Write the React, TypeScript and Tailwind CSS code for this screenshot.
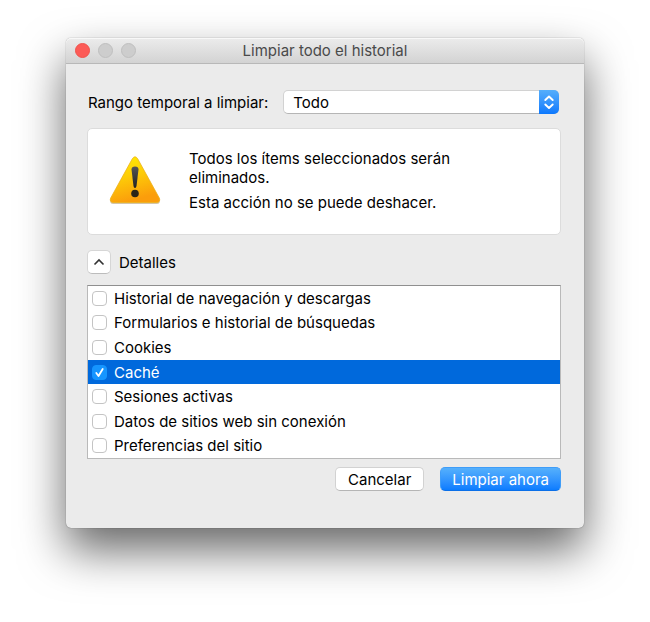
import { useState } from "react";

const ranges = ["La última hora", "Las últimas dos horas", "Las últimas cuatro horas", "Hoy", "Todo"];

const items = [
    "Historial de navegación y descargas",
    "Formularios e historial de búsquedas",
    "Cookies",
    "Caché",
    "Sesiones activas",
    "Datos de sitios web sin conexión",
    "Preferencias del sitio",
];

function TitleBar(props: { title: string }) {
    return <header className="relative flex h-[26px] items-center justify-center rounded-t-[5px] border-b border-[#b8b8b8] bg-linear-to-b from-[#ececec] to-[#d3d3d3] shadow-[inset_0_1px_0_#f8f8f8]">
        <div className="absolute left-[9px] flex gap-2">
            <button type="button" aria-label="Cerrar" className="size-[15px] rounded-full border border-[#f0524b] bg-[#fc5b57]" />
            <button type="button" aria-label="Minimizar" disabled className="size-[15px] rounded-full border border-[#bfbfbf] bg-[#cdcdcd]" />
            <button type="button" aria-label="Ampliar" disabled className="size-[15px] rounded-full border border-[#bfbfbf] bg-[#cdcdcd]" />
        </div>
        <h1 className="text-[15px] text-[#4a4a4a]">{props.title}</h1>
    </header>
}

function RangeSelect() {
    const [range, setRange] = useState("Todo");
    return <div className="flex items-center gap-[15px] pr-0.5 pl-px">
        <label htmlFor="range" className="whitespace-nowrap">Rango temporal a limpiar:</label>
        <div className="relative flex-1">
            <select
                id="range"
                value={range}
                onChange={(e) => setRange(e.target.value)}
                className="block h-6 w-full appearance-none rounded-[5px] border border-[#d2d2d2] border-b-[#b5b5b5] bg-white pl-[9px] pr-6"
            >
                {ranges.map((r) => <option key={r}>{r}</option>)}
            </select>
            <div className="pointer-events-none absolute inset-y-0 right-0 flex w-5 items-center justify-center rounded-r-[5px] bg-linear-to-b from-[#55aefb] to-[#0a78fd]">
                <svg width="12" height="18" viewBox="0 0 12 18" fill="none" stroke="#fff" strokeWidth="1.900" strokeLinecap="round" strokeLinejoin="round">
                    <path d="M2.300 7L6 3.500L9.700 7M2.300 11.500L6 15l3.700-3.500" />
                </svg>
            </div>
        </div>
    </div>
}

function WarningIcon() {
    return <svg width="54" height="52" viewBox="0 0 54 52" className="shrink-0" aria-hidden="true">
        <defs>
            <linearGradient id="sign" x1="0" y1="0" x2="0.3" y2="1">
                <stop offset="0" stopColor="#fff000" />
                <stop offset="0.5" stopColor="#fdcb08" />
                <stop offset="1" stopColor="#fb9d0b" />
            </linearGradient>
            <linearGradient id="mark" x1="0" y1="0" x2="0" y2="1">
                <stop offset="0" stopColor="#555" />
                <stop offset="1" stopColor="#222" />
            </linearGradient>
        </defs>
        <path d="M24 5q3-5 6 0l21.500 39q1.500 5-3 5h-43q-4.500 0-3-5z" fill="#a88a52" opacity="0.5" />
        <path d="M24.200 4q2.800-4.500 5.600 0L51.300 43q1.500 4-2.500 4.500H5.200q-4-.5-2.500-4.500z" fill="url(#sign)" stroke="#eeb21c" strokeWidth="0.800" />
        <path d="M23.500 14.500q0-3 3.500-3t3.500 3L28.500 31q-.3 2-1.500 2t-1.500-2z" fill="url(#mark)" />
        <circle cx="27" cy="38.500" r="3.800" fill="#2b2518" />
    </svg>
}

function Item(props: { label: string, checked: boolean, selected: boolean, onToggle: () => void }) {
    return <li className={props.selected ? "flex flex-1 bg-[#0069dc] text-white" : "flex flex-1"}>
        <label className="flex flex-1 items-center gap-[7px] pl-1">
            <span className="relative block size-[15px]">
                <input
                    type="checkbox"
                    checked={props.checked}
                    onChange={props.onToggle}
                    className="block size-[15px] appearance-none rounded-[4px] border border-[#c4c4c4] bg-white checked:border-[#1595ff] checked:bg-[#1595ff]"
                />
                {props.checked && <svg viewBox="0 0 15 15" className="pointer-events-none absolute inset-0" fill="none" stroke="#fff" strokeWidth="1.800" strokeLinecap="round" strokeLinejoin="round">
                    <path d="M4.300 8l2.200 3L10.700 4" />
                </svg>}
            </span>
            {props.label}
        </label>
    </li>
}

export default function App() {
    const [checked, setChecked] = useState(["Caché"]);
    const [open, setOpen] = useState(true);

    const toggle = (label: string) =>
        setChecked(checked.includes(label) ? checked.filter((c) => c !== label) : [...checked, label]);

    return <main className="min-h-screen bg-white px-[66px] pt-[38px] pb-[93px] font-['Inter',sans-serif] text-[15px] leading-[19px] text-black">
        <div className="rounded-[5px] bg-[#ebebeb] shadow-[0_0_1px_rgba(0,0,0,0.6),0_22px_46px_rgba(0,0,0,0.6)]">
            <TitleBar title="Limpiar todo el historial" />
            <form className="flex flex-col pt-[26px] pr-[23px] pb-[37px] pl-[21px]" onSubmit={(e) => e.preventDefault()}>
                <RangeSelect />

                <section className="mt-[14px] flex h-[107px] items-center gap-[27px] rounded-[5px] border border-[#dcdcdc] bg-white pr-20 pb-0.5 pl-5">
                    <WarningIcon />
                    <div className="flex flex-col gap-[6px]">
                        <p>Todos los ítems seleccionados serán eliminados.</p>
                        <p>Esta acción no se puede deshacer.</p>
                    </div>
                </section>

                <div className="mt-[15px] flex items-center gap-2">
                    <button
                        id="details"
                        type="button"
                        aria-expanded={open}
                        onClick={() => setOpen(!open)}
                        className="flex size-6 items-center justify-center rounded-[5px] border border-[#d6d6d6] border-b-[#bcbcbc] bg-white"
                    >
                        <svg width="12" height="8" viewBox="0 0 12 8" fill="none" stroke="#333" strokeWidth="1.600" className={open ? "" : "rotate-180"}>
                            <path d="M1.500 6.500L6 2l4.500 4.500" />
                        </svg>
                    </button>
                    <label htmlFor="details">Detalles</label>
                </div>

                {open && <ul className="mt-[11px] flex h-[174px] flex-col border border-[#b9b9b9] border-t-[#8f8f8f] bg-white">
                    {items.map((label) => <Item
                        key={label}
                        label={label}
                        checked={checked.includes(label)}
                        selected={label === "Caché"}
                        onToggle={() => toggle(label)}
                    />)}
                </ul>}

                <div className="mt-2 flex justify-end gap-4">
                    <button type="button" className="h-6 rounded-[5px] border border-[#d2d2d2] border-b-[#b5b5b5] bg-white px-3">Cancelar</button>
                    <button type="submit" className="h-6 rounded-[5px] border border-[#3f9df8] border-b-[#0a6fe8] bg-linear-to-b from-[#55b0fc] to-[#0a7cff] px-[11px] text-white">Limpiar ahora</button>
                </div>
            </form>
        </div>
    </main>
}
